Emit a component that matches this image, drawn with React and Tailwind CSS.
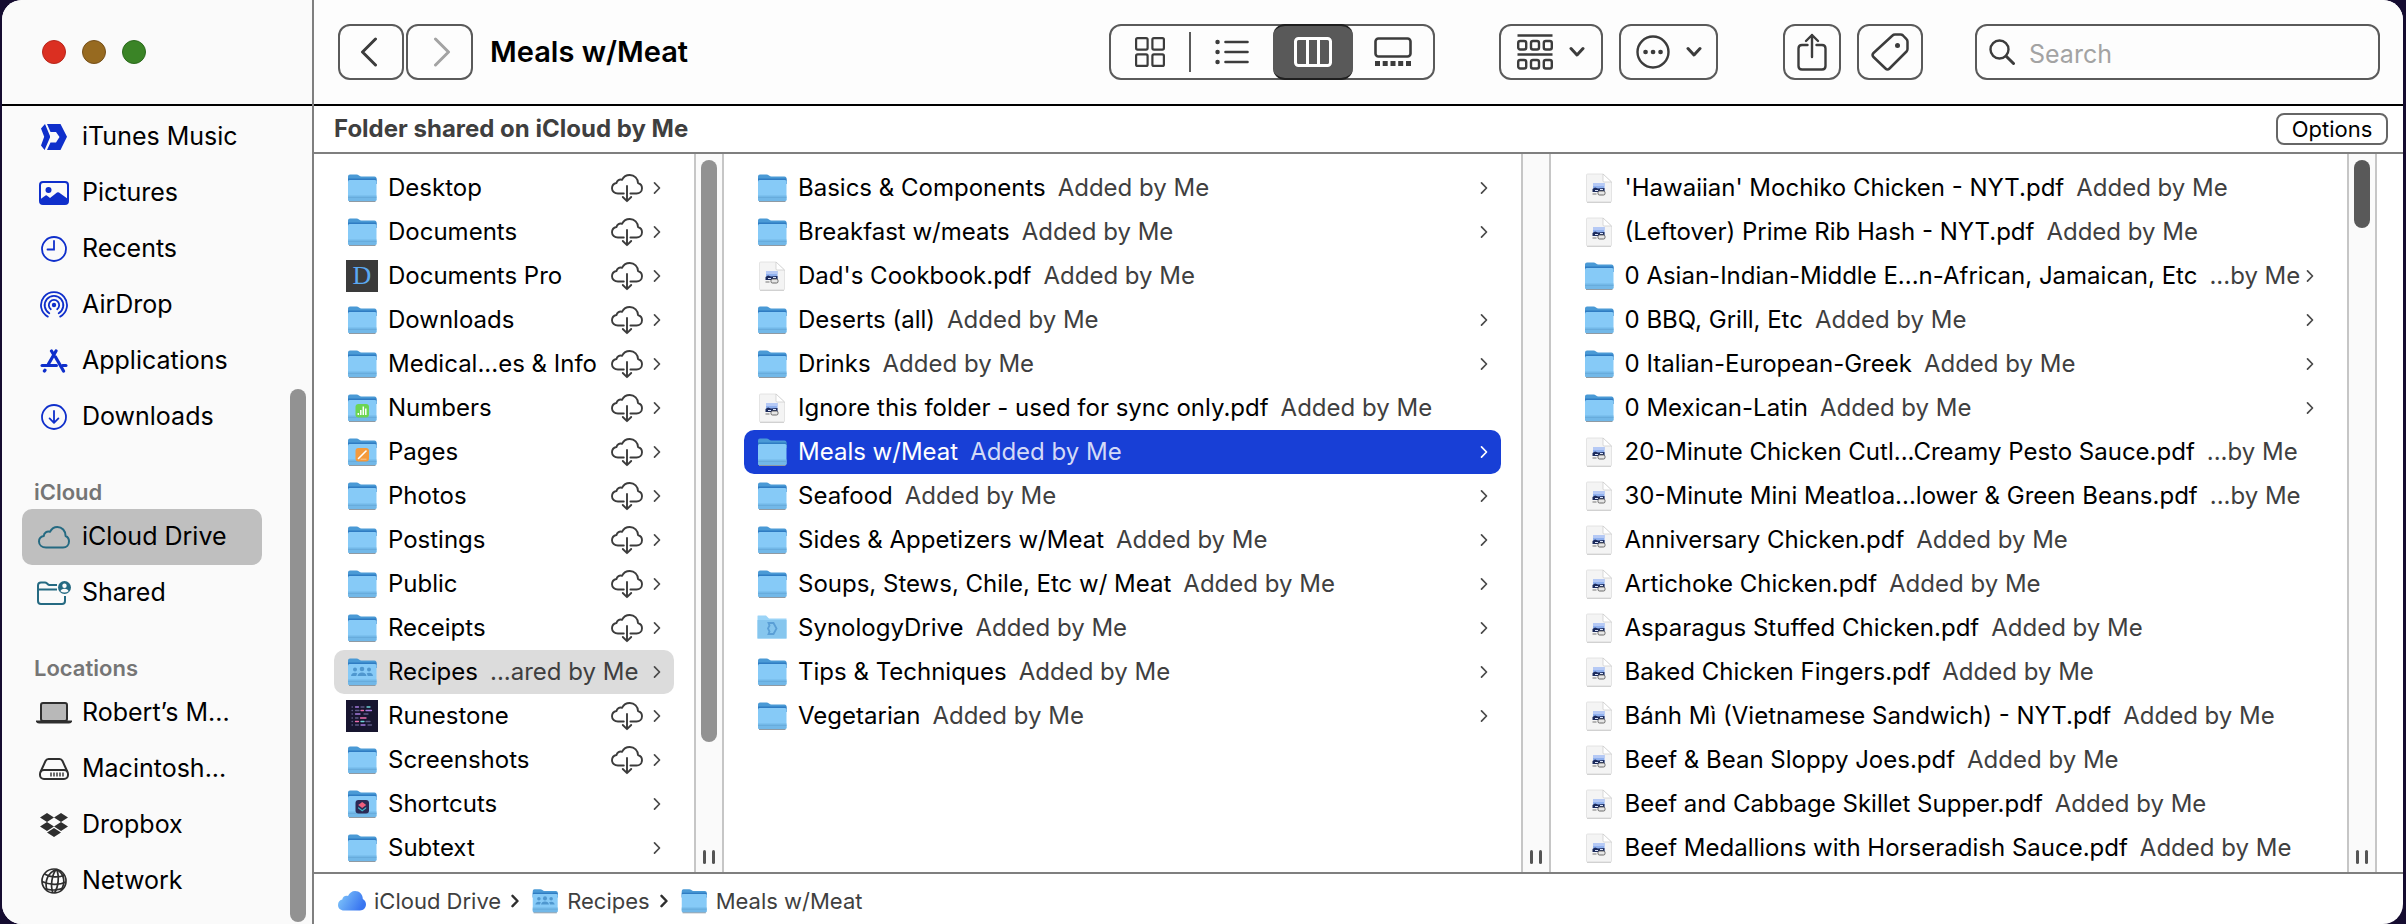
import { useState } from "react";

const favorites = [
  { name: "iTunes Music", icon: SynologyIcon },
  { name: "Pictures", icon: PicturesIcon },
  { name: "Recents", icon: ClockIcon },
  { name: "AirDrop", icon: AirDropIcon },
  { name: "Applications", icon: AppsIcon },
  { name: "Downloads", icon: DownloadIcon },
];

const icloud = [
  { name: "iCloud Drive", icon: CloudIcon },
  { name: "Shared", icon: SharedIcon },
];

const locations = [
  { name: "Robert’s M...", icon: LaptopIcon },
  { name: "Macintosh...", icon: DiskIcon },
  { name: "Dropbox", icon: DropboxIcon },
  { name: "Network", icon: GlobeIcon },
];

const driveItems = [
  { name: "Desktop", cloud: true },
  { name: "Documents", cloud: true },
  { name: "Documents Pro", kind: "docpro", cloud: true },
  { name: "Downloads", cloud: true },
  { name: "Medical...es & Info", cloud: true },
  { name: "Numbers", kind: "numbers", cloud: true },
  { name: "Pages", kind: "pages", cloud: true },
  { name: "Photos", cloud: true },
  { name: "Postings", cloud: true },
  { name: "Public", cloud: true },
  { name: "Receipts", cloud: true },
  { name: "Recipes", kind: "people", note: "...ared by Me" },
  { name: "Runestone", kind: "runestone", cloud: true },
  { name: "Screenshots", cloud: true },
  { name: "Shortcuts", kind: "shortcuts" },
  { name: "Subtext" },
];

const recipeItems = [
  { name: "Basics & Components", note: "Added by Me" },
  { name: "Breakfast w/meats", note: "Added by Me" },
  { name: "Dad's Cookbook.pdf", kind: "pdf", note: "Added by Me" },
  { name: "Deserts (all)", note: "Added by Me" },
  { name: "Drinks", note: "Added by Me" },
  { name: "Ignore this folder - used for sync only.pdf", kind: "pdf", note: "Added by Me" },
  { name: "Meals w/Meat", note: "Added by Me" },
  { name: "Seafood", note: "Added by Me" },
  { name: "Sides & Appetizers w/Meat", note: "Added by Me" },
  { name: "Soups, Stews, Chile, Etc w/ Meat", note: "Added by Me" },
  { name: "SynologyDrive", kind: "synology", note: "Added by Me" },
  { name: "Tips & Techniques", note: "Added by Me" },
  { name: "Vegetarian", note: "Added by Me" },
];

const mealItems = [
  { name: "'Hawaiian' Mochiko Chicken - NYT.pdf", kind: "pdf", note: "Added by Me" },
  { name: "(Leftover) Prime Rib Hash - NYT.pdf", kind: "pdf", note: "Added by Me" },
  { name: "0 Asian-Indian-Middle E...n-African, Jamaican, Etc", note: "...by Me" },
  { name: "0 BBQ, Grill, Etc", note: "Added by Me" },
  { name: "0 Italian-European-Greek", note: "Added by Me" },
  { name: "0 Mexican-Latin", note: "Added by Me" },
  { name: "20-Minute Chicken Cutl...Creamy Pesto Sauce.pdf", kind: "pdf", note: "...by Me" },
  { name: "30-Minute Mini Meatloa...lower & Green Beans.pdf", kind: "pdf", note: "...by Me" },
  { name: "Anniversary Chicken.pdf", kind: "pdf", note: "Added by Me" },
  { name: "Artichoke Chicken.pdf", kind: "pdf", note: "Added by Me" },
  { name: "Asparagus Stuffed Chicken.pdf", kind: "pdf", note: "Added by Me" },
  { name: "Baked Chicken Fingers.pdf", kind: "pdf", note: "Added by Me" },
  { name: "Bánh Mì (Vietnamese Sandwich) - NYT.pdf", kind: "pdf", note: "Added by Me" },
  { name: "Beef & Bean Sloppy Joes.pdf", kind: "pdf", note: "Added by Me" },
  { name: "Beef and Cabbage Skillet Supper.pdf", kind: "pdf", note: "Added by Me" },
  { name: "Beef Medallions with Horseradish Sauce.pdf", kind: "pdf", note: "Added by Me" },
];

/* ---------- sidebar icons ---------- */

function SynologyIcon() {
  return (
    <svg width="26" height="26" viewBox="0 0 26 26" fill="#0f2fcb">
      <path d="M4 0L0 4.5L3.2 12.8L0 21.5L3.6 26L9 13.5V12z" />
      <path d="M6 0H19.5L26 12.8L19.5 26H6L9.5 18.5H15L18.5 13L15 8H9.5z" />
    </svg>
  );
}

function PicturesIcon() {
  return (
    <svg width="30" height="24" viewBox="0 0 30 24">
      <rect x="1" y="1" width="28" height="22" rx="3" fill="none" stroke="#0f2fcb" strokeWidth="2" />
      <circle cx="9.5" cy="9" r="3" fill="#0f2fcb" />
      <path d="M1 18.5L6.5 14.5Q7.5 14 8.5 15L11 17L18 11.5Q19 11 20 11.5L29 18V21Q29 23 27 23H3Q1 23 1 21z" fill="#0f2fcb" />
    </svg>
  );
}

function ClockIcon() {
  return (
    <svg width="26" height="26" viewBox="0 0 26 26" fill="none" stroke="#0f2fcb" strokeWidth="1.8" strokeLinecap="round">
      <circle cx="13" cy="13" r="12" />
      <path d="M13 5V13.5H6.5" />
    </svg>
  );
}

function AirDropIcon() {
  return (
    <svg width="28" height="28" viewBox="0 0 28 28" fill="none" stroke="#0f2fcb" strokeWidth="1.8" strokeLinecap="round">
      <circle cx="14" cy="14" r="2.2" fill="#0f2fcb" stroke="none" />
      <path d="M10.8 18.2A5.2 5.2 0 1 1 17.2 18.2" />
      <path d="M9.3 22.2A9.3 9.3 0 1 1 18.7 22.2" />
      <path d="M7.8 25.6A13 13 0 1 1 20.2 25.6" />
    </svg>
  );
}

function AppsIcon() {
  return (
    <svg width="28" height="24" viewBox="0 0 28 24" fill="none" stroke="#0f2fcb" strokeWidth="3.2" strokeLinecap="round">
      <path d="M16 2L8.5 15" />
      <path d="M11.5 2L13.6 5.4" />
      <path d="M15.5 8L23.5 22" />
      <path d="M2 16.5H16.5" strokeWidth="3" />
      <path d="M22.5 16.5H26" strokeWidth="3" />
      <path d="M5 21.2L4.4 22" />
    </svg>
  );
}

function DownloadIcon() {
  return (
    <svg width="26" height="26" viewBox="0 0 26 26" fill="none" stroke="#0f2fcb" strokeWidth="1.8" strokeLinecap="round" strokeLinejoin="round">
      <circle cx="13" cy="13" r="12" />
      <path d="M13 7V18.5M8.6 14.4L13 18.8L17.4 14.4" />
    </svg>
  );
}

function CloudIcon() {
  return (
    <svg width="32" height="23" viewBox="0 0 32 23" fill="none" stroke="#256a82" strokeWidth="2" strokeLinejoin="round">
      <path d="M8 21.5C4 21.5 1 19 1 15.5C1 12.5 3 10.5 5.8 10C5.8 7 9 4.6 12 5.8C13.6 2.8 16 1 19.3 1C24 1 27.6 4.8 27.6 10C30 11 31 13 31 15.3C31 19 28.5 21.5 25 21.5z" />
    </svg>
  );
}

function SharedIcon() {
  return (
    <svg width="34" height="24" viewBox="0 0 34 24" fill="none" stroke="#256a82" strokeWidth="2">
      <path d="M20 4H12.5Q11.5 4 10.6 3L9.8 2.2Q9 1.5 8 1.5H4Q1 1.5 1 4.5V20Q1 23 4 23H25Q28 23 28 20V15" />
      <path d="M1 8.5H20" />
      <circle cx="27.5" cy="6.5" r="6.5" fill="#256a82" stroke="none" />
      <circle cx="27.5" cy="4.8" r="2.2" fill="#fafafa" stroke="none" />
      <path d="M23.5 10.3Q24 7.8 27.5 7.8T31.5 10.3Q29.8 11.6 27.5 11.6T23.5 10.3z" fill="#fafafa" stroke="none" />
    </svg>
  );
}

function LaptopIcon() {
  return (
    <svg width="36" height="22" viewBox="0 0 36 22">
      <rect x="5" y="1" width="26" height="18" rx="2" fill="#b8b8b8" stroke="#2e2e2e" strokeWidth="2" />
      <path d="M0 18.5H36V19.5Q35.5 21.5 33 21.5H3Q0.5 21.5 0 19.5z" fill="#2e2e2e" />
    </svg>
  );
}

function DiskIcon() {
  return (
    <svg width="30" height="22" viewBox="0 0 30 22" fill="none" stroke="#2e2e2e" strokeWidth="2">
      <rect x="1" y="12" width="28" height="9" rx="4" />
      <path d="M1.5 14L6.5 3Q7.5 1 9.5 1H20.5Q22.5 1 23.5 3L28.5 14" />
      <path d="M12 14.5V18.5M15 14.5V18.5M18 14.5V18.5M21 14.5V18.5M24 14.5V18.5" strokeWidth="1.4" />
    </svg>
  );
}

function DropboxIcon() {
  return (
    <svg width="28" height="24" viewBox="0 0 28 24" fill="#2e2e2e">
      <path d="M7 0L14 4.5L7 9L0 4.5zM21 0L28 4.5L21 9L14 4.5zM7 9L14 13.5L7 18L0 13.5zM21 9L28 13.5L21 18L14 13.5zM14 15L21 19.5L14 24L7 19.5z" />
    </svg>
  );
}

function GlobeIcon() {
  return (
    <svg width="26" height="26" viewBox="0 0 26 26" fill="none" stroke="#2e2e2e" strokeWidth="1.7">
      <circle cx="13" cy="13" r="12" />
      <path d="M15.5 1.2C11 6 9 18 12 25M15.5 1.2C6 5 3.5 14 6 22.5M15.5 1.2C18.5 8 17.5 19 13.5 25M15.5 1.2C24 6 24.5 15 20 22.5" />
      <path d="M3.5 6C9 9.5 18 10 23.5 7M1 13.5C8 17 18 17.5 25 14M4 20.8C9 22.5 17 22.5 22.5 20" />
    </svg>
  );
}

/* ---------- file icons ---------- */

function FolderBase() {
  return (
    <>
      <path d="M2 4.5Q2 2.5 4 2.5H10.5Q12 2.5 13 3.5T15.5 4.5H28.5Q30.5 4.5 30.5 6.5V12H2z" fill="#4a9ad6" />
      <path d="M2 6.5H30.5V12H2z" fill="#2f7cc3" />
      <path d="M2 9.5Q2 8 3.5 8H29Q30.5 8 30.5 9.5V27.5Q30.5 29 29 29H3.5Q2 29 2 27.5z" fill="#86caf7" />
      <path d="M2 23.5H30.5V27.5Q30.5 29 29 29H3.5Q2 29 2 27.5z" fill="#72b8e8" />
      <path d="M2 25.5H30.5" stroke="#62a5d4" strokeWidth="0.6" />
      <path d="M3 29.5H29.5" stroke="#8f9aa3" strokeWidth="1" />
    </>
  );
}

function FileIcon({ kind, className = "size-8" }) {
  if (kind === "pdf") {
    return (
      <svg className={className} viewBox="0 0 32 32">
        <path d="M3.5 3Q3.500 2 4.5 2H20L28.500 10V29Q28.500 30 27.5 30H4.5Q3.500 30 3.5 29z" fill="#f4f4f4" stroke="#dedede" strokeWidth="0.8" />
        <path d="M20 2V9Q20 10 21 10H28.5z" fill="#ffffff" stroke="#c9c9c9" strokeWidth="0.7" />
        <path d="M4 30.4H28" stroke="#c4c4c4" strokeWidth="0.8" />
        <rect x="10" y="11" width="11.5" height="9" fill="#8fb0ee" />
        <rect x="10" y="11" width="11.5" height="3" fill="#b5c9f5" />
        <path d="M9.5 17L12 15.500L15 16.5L21.5 16V20H9.5z" fill="#1b2a5c" />
        <path d="M12 18.5H15M17 17.5H20" stroke="#dbe4f8" strokeWidth="1" />
        <rect x="15" y="19" width="7" height="4" rx="1.5" fill="#e6e6e6" stroke="#5c5c5c" strokeWidth="0.9" />
        <path d="M9.500 22H13.5" stroke="#8a8a8a" strokeWidth="1.2" />
      </svg>
    );
  }
  if (kind === "docpro") {
    return (
      <span className="flex size-8 items-center justify-center bg-[#3a3a3a] font-['Liberation_Serif',serif] text-[26px] leading-8 text-[#5aa9f2]">
        D
      </span>
    );
  }
  if (kind === "runestone") {
    return (
      <svg className={className} viewBox="0 0 32 32" strokeWidth="1.3" strokeLinecap="round">
        <rect width="32" height="32" fill="#17152f" />
        <g stroke="#5d5a86">
          <path d="M6 7H6.5M6 10.5H6.5M6 14H6.5M6 18H6.5M6 21.5H6.5M6 25H6.5" />
          <path d="M15 7H18M9.5 10.5H13M18 14H22M9.5 18H12M20 21.5H24M9.5 25H12.5M22 25H25.5" />
        </g>
        <path d="M9.5 7H12.5M20 10.5H25.5M9.5 14H14M15 25H19" stroke="#a67be0" />
        <path d="M15 10.5H17.5M14.5 18H20M9.5 21.5H12.5" stroke="#ef6fae" />
        <path d="M21 7H24M15 21.5H18" stroke="#6fd3d8" />
      </svg>
    );
  }
  if (kind === "synology") {
    return (
      <svg className={className} viewBox="0 0 32 32">
        <path d="M1.5 4Q1.5 3.5 2 3.5H10L13 6.5H30.5V26.5H1.5z" fill="#9bd4f7" />
        <path d="M1.5 8H30.5V26.5H1.5z" fill="#86c6ee" />
        <path d="M12.5 11H17.5L20.5 16.5L17.5 22H12.5L13.5 19.5L12 16.5L13.5 13.5z" fill="none" stroke="#5a9fd6" strokeWidth="1.8" />
      </svg>
    );
  }
  return (
    <svg className={className} viewBox="0 0 32 32">
      <FolderBase />
      {kind === "numbers" ? (
        <>
          <rect x="9.5" y="12" width="13.5" height="13.5" rx="3" fill="#6bd552" />
          <path d="M12.3 23V21M14.8 23V18M17.3 23V14.5M19.8 23V16.5" stroke="#fff" strokeWidth="1.5" />
        </>
      ) : null}
      {kind === "pages" ? (
        <>
          <rect x="9.5" y="12" width="13.5" height="13.5" rx="3" fill="#f49a3c" />
          <path d="M12.5 22.5L20 15" stroke="#fff" strokeWidth="1.6" strokeLinecap="round" />
          <path d="M14.5 23.2H20.5" stroke="#fbd3a6" strokeWidth="0.8" />
        </>
      ) : null}
      {kind === "shortcuts" ? (
        <>
          <rect x="9.5" y="12" width="13.5" height="13.5" rx="3" fill="#2b2a55" />
          <path d="M16.2 14L20.2 17L16.2 20L12.2 17z" fill="#ef5f7e" />
          <path d="M12.2 19L16.2 22L20.2 19V20.5L16.2 23.5L12.2 20.5z" fill="#45b6c9" />
        </>
      ) : null}
      {kind === "people" ? (
        <g fill="#4f97cf">
          <circle cx="9" cy="13.5" r="2" />
          <circle cx="16" cy="13" r="2.3" />
          <circle cx="23" cy="13.5" r="2" />
          <path d="M5 20Q5.5 16.8 9 16.8Q10.5 16.8 11.3 17.5Q10.5 18.5 10.3 20zM11.5 20Q12 16.5 16 16.5T20.5 20zM27 20Q26.5 16.8 23 16.8Q21.5 16.8 20.7 17.5Q21.5 18.5 21.7 20z" />
        </g>
      ) : null}
    </svg>
  );
}

function CloudDownload() {
  return (
    <svg width="32" height="30" viewBox="0 0 32 30" fill="none" stroke="#3c3c3c" strokeWidth="1.9" strokeLinecap="round" strokeLinejoin="round">
      <path d="M12.8 20.5H7C3.5 20.5 1 18.3 1 15.3C1 12.5 3 10.5 5.5 10C6 7.5 8.5 6 11 6.8C12.5 3.8 15.5 2 18.8 2C23.5 2 27 5.5 27 10C29.5 10.8 31 12.7 31 15.2C31 18.3 28.5 20.5 25.5 20.5H19.4" />
      <path d="M16 13V28M11.8 24L16 28.2L20.2 24" />
    </svg>
  );
}

function Chevron({ className = "text-[#4a4a4a]", strokeWidth = 1.7 }) {
  return (
    <svg className={className} width="8" height="14" viewBox="0 0 8 14" fill="none" stroke="currentColor" strokeWidth={strokeWidth} strokeLinecap="round" strokeLinejoin="round">
      <path d="M1.5 1.8L6.5 7L1.5 12.2" />
    </svg>
  );
}

function ChevronDown() {
  return (
    <svg width="16" height="12" viewBox="0 0 16 12" fill="none" stroke="#3c3c3c" strokeWidth="3" strokeLinecap="round" strokeLinejoin="round">
      <path d="M2 2.5L8 9L14 2.5" />
    </svg>
  );
}

/* ---------- layout pieces ---------- */

function SidebarGroup({ title, items, selected, onSelect }) {
  return (
    <section>
      {title ? <h2 className="mt-8 h-8 px-8 text-[22px] leading-[30px] font-semibold text-[#757575]">{title}</h2> : null}
      <ul className="pr-[50px] pl-5">
        {items.map(({ name, icon: Icon }) => (
          <li key={name}>
            <button
              type="button"
              onClick={() => onSelect(name)}
              className={`flex h-14 w-full items-center gap-2 rounded-[10px] pl-3 text-left text-[25px] whitespace-nowrap text-black ${
                selected === name ? "bg-[#bfbfbf]" : ""
              }`}
            >
              <span className="flex w-10 shrink-0 justify-center">
                <Icon />
              </span>
              {name}
            </button>
          </li>
        ))}
      </ul>
    </section>
  );
}

function FileList({ label, items, selected, active }) {
  return (
    <ul aria-label={label} className="min-w-0 flex-1 overflow-hidden px-5 pt-3">
      {items.map((item) => {
        const isSelected = item.name === selected;
        const isActive = isSelected && active;
        return (
          <li key={item.name}>
            <button
              type="button"
              className={`flex h-11 w-full items-center rounded-[10px] pr-[13px] pl-3 text-left text-2xl whitespace-nowrap ${
                isActive ? "bg-[#183fd6] text-white" : isSelected ? "bg-[#dcdcdc] text-black" : "text-black"
              }`}
            >
              <span className="mr-2.5 shrink-0">
                <FileIcon kind={item.kind} />
              </span>
              <span>{item.name}</span>
              {item.note ? (
                <span className={`ml-3 ${isActive ? "text-[#d3daf7]" : "text-[#3f3f3f]"}`}>{item.note}</span>
              ) : null}
              <span className="ml-auto flex shrink-0 items-center gap-2.5">
                {item.cloud ? <CloudDownload /> : null}
                {item.kind !== "pdf" ? <Chevron className={isActive ? "text-white" : "text-[#4a4a4a]"} /> : null}
              </span>
            </button>
          </li>
        );
      })}
    </ul>
  );
}

function Track({ thumb }) {
  return (
    <div className="flex w-[30px] shrink-0 flex-col items-center justify-between border-x-2 border-[#c6c6c6] bg-[#fafafa] pt-1.5 pb-2">
      <div className={`w-4 rounded-full ${thumb}`} />
      <div className="flex gap-1.5">
        <span className="h-3.5 w-[3px] rounded-full bg-[#555555]" />
        <span className="h-3.5 w-[3px] rounded-full bg-[#555555]" />
      </div>
    </div>
  );
}

const toolButton = "flex h-14 items-center justify-center rounded-xl border-2 border-[#5a5a5a] bg-[#fdfdfd]";

function Toolbar() {
  const [query, setQuery] = useState("");

  return (
    <header className="flex h-[106px] shrink-0 items-center border-b-2 border-black bg-[#fdfdfd] pr-[23px] pl-6">
      <div className="flex gap-0.5">
        <button type="button" aria-label="Back" className={`${toolButton} w-[66px] pr-1`}>
          <svg width="18" height="30" viewBox="0 0 18 30" fill="none" stroke="#3c3c3c" strokeWidth="3" strokeLinecap="round" strokeLinejoin="round">
            <path d="M15.5 2L2.5 15L15.5 28" />
          </svg>
        </button>
        <button type="button" aria-label="Forward" className={`${toolButton} w-[67px] pl-1`}>
          <svg width="18" height="30" viewBox="0 0 18 30" fill="none" stroke="#a3a3a3" strokeWidth="3" strokeLinecap="round" strokeLinejoin="round">
            <path d="M2.5 2L15.5 15L2.5 28" />
          </svg>
        </button>
      </div>
      <h1 className="ml-[17px] flex-1 text-[29px] font-semibold whitespace-nowrap text-black">Meals w/Meat</h1>

      <div className="flex h-14 w-[326px] items-stretch rounded-xl border-2 border-[#5a5a5a]">
        <button type="button" aria-label="Icon view" className="flex w-[78px] items-center justify-center">
          <svg width="30" height="30" viewBox="0 0 30 30" fill="none" stroke="#3c3c3c" strokeWidth="2.2">
            <rect x="1.1" y="1.1" width="11.5" height="11.5" rx="1.5" />
            <rect x="17.4" y="1.1" width="11.5" height="11.5" rx="1.5" />
            <rect x="1.1" y="17.4" width="11.5" height="11.5" rx="1.5" />
            <rect x="17.4" y="17.4" width="11.5" height="11.5" rx="1.5" />
          </svg>
        </button>
        <span className="my-1.5 w-0.5 bg-[#5a5a5a]" />
        <button type="button" aria-label="List view" className="flex w-[82px] items-center justify-center">
          <svg width="34" height="26" viewBox="0 0 34 26" fill="none" stroke="#3c3c3c" strokeWidth="2.6" strokeLinecap="round">
            <path d="M10.5 3H32.5M10.5 13H32.5M10.5 23H32.5" />
            <path d="M2.5 3H2.6M2.5 13H2.6M2.5 23H2.6" strokeWidth="4.4" />
          </svg>
        </button>
        <button type="button" aria-label="Column view" aria-pressed="true" className="-my-0.5 flex w-20 items-center justify-center rounded-xl border-y-2 border-[#1f1f1f] bg-[#595959]">
          <svg width="38" height="30" viewBox="0 0 38 30" fill="none" stroke="#ffffff" strokeWidth="3">
            <rect x="1.5" y="1.5" width="35" height="27" rx="3" />
            <path d="M13.5 2V28M24.5 2V28" />
          </svg>
        </button>
        <button type="button" aria-label="Gallery view" className="flex w-20 items-center justify-center">
          <svg width="38" height="30" viewBox="0 0 38 30">
            <rect x="1.5" y="1.5" width="35" height="18" rx="3" fill="none" stroke="#3c3c3c" strokeWidth="2.6" />
            <path d="M1 24H6V29H1zM8.7 24H13.7V29H8.7zM16.5 24H21.5V29H16.5zM24.2 24H29.2V29H24.2zM32 24H37V29H32z" fill="#3c3c3c" />
          </svg>
        </button>
      </div>

      <button type="button" aria-label="Group items" className={`${toolButton} ml-16 w-[104px] gap-4`}>
        <svg width="36" height="36" viewBox="0 0 36 36" fill="none" stroke="#3c3c3c" strokeWidth="2.4">
          <path d="M0.5 1.5H35.5M0.5 20.5H35.5" />
          <rect x="1.2" y="7" width="8" height="8.5" rx="2" />
          <rect x="14" y="7" width="8" height="8.5" rx="2" />
          <rect x="26.8" y="7" width="8" height="8.5" rx="2" />
          <rect x="1.2" y="26" width="8" height="8.5" rx="2" />
          <rect x="14" y="26" width="8" height="8.5" rx="2" />
          <rect x="26.8" y="26" width="8" height="8.5" rx="2" />
        </svg>
        <ChevronDown />
      </button>
      <button type="button" aria-label="More actions" className={`${toolButton} ml-4 w-[99px] gap-4`}>
        <svg width="34" height="34" viewBox="0 0 34 34" fill="none" stroke="#3c3c3c">
          <circle cx="17" cy="17" r="15.5" strokeWidth="2.4" />
          <path d="M9.5 17H9.6M17 17H17.1M24.5 17H24.6" strokeWidth="4.6" strokeLinecap="round" />
        </svg>
        <ChevronDown />
      </button>

      <button type="button" aria-label="Share" className={`${toolButton} ml-[65px] w-[58px]`}>
        <svg width="30" height="38" viewBox="0 0 30 38" fill="none" stroke="#3c3c3c" strokeWidth="2.4" strokeLinecap="round" strokeLinejoin="round">
          <path d="M10.5 12H5Q1.5 12 1.5 15.5V33Q1.5 36.5 5 36.5H25Q28.5 36.5 28.5 33V15.5Q28.5 12 25 12H19.5" />
          <path d="M15 24V2M9 8L15 2L21 8" />
        </svg>
      </button>
      <button type="button" aria-label="Tags" className={`${toolButton} ml-4 w-[66px]`}>
        <svg width="38" height="38" viewBox="0 0 38 38" fill="none" stroke="#3c3c3c" strokeWidth="2.5" strokeLinejoin="round">
          <path d="M21.5 2.5Q22.5 1.5 24 1.5H29.5Q31 1.5 32 2.5L35.5 6.2Q36.5 7.2 36.5 8.7V16Q36.5 17.5 35.5 18.5L18.5 35.5Q16.5 37.5 14.5 35.5L2.5 24Q0.5 22 2.5 20z" />
          <circle cx="26.5" cy="12.5" r="2.5" fill="#3c3c3c" stroke="none" />
        </svg>
      </button>

      <label className="ml-[52px] flex h-14 w-[405px] items-center gap-3.5 rounded-xl border-2 border-[#5a5a5a] bg-[#fdfdfd] pl-3">
        <svg className="shrink-0" width="26" height="26" viewBox="0 0 26 26" fill="none" stroke="#3c3c3c" strokeWidth="2.4" strokeLinecap="round">
          <circle cx="10.5" cy="10.5" r="9" />
          <path d="M17.2 17.2L24.5 24.5" strokeWidth="3" />
        </svg>
        <input
          type="text"
          aria-label="Search"
          placeholder="Search"
          value={query}
          onChange={(event) => setQuery(event.target.value)}
          className="min-w-0 flex-1 bg-transparent pt-1.5 text-[25px] outline-none placeholder:text-[#a3a3a3]"
        />
      </label>
    </header>
  );
}

function PathBar() {
  return (
    <nav aria-label="Path" className="flex h-[52px] shrink-0 items-center border-t-2 border-[#7f7f7f] pt-1 pl-6 text-[22px] whitespace-nowrap text-[#3f3f3f]">
      <a href="#icloud" className="flex items-center gap-2">
        <svg width="28" height="20" viewBox="0 0 28 20">
          <defs>
            <linearGradient id="cloudFill" x1="0" y1="0" x2="1" y2="0.4">
              <stop offset="0" stopColor="#86cdfb" />
              <stop offset="1" stopColor="#3a76f0" />
            </linearGradient>
          </defs>
          <path d="M6 19.5C2.5 19.5 0 17.2 0 14C0 11 2 9 4.3 8.6C4.5 5.6 7.5 4 10 5C11.3 2 14 0 17 0C21.5 0 24.8 3.5 24.8 8C26.8 9 28 11 28 13.3C28 17 25.5 19.5 22 19.5z" fill="url(#cloudFill)" />
        </svg>
        iCloud Drive
      </a>
      <span className="mr-3 ml-2.5">
        <Chevron className="text-[#2e2e2e]" strokeWidth={2.4} />
      </span>
      <a href="#recipes" className="flex items-center gap-2">
        <FileIcon kind="people" className="size-7" />
        Recipes
      </a>
      <span className="mr-3 ml-2.5">
        <Chevron className="text-[#2e2e2e]" strokeWidth={2.4} />
      </span>
      <a href="#meals" className="flex items-center gap-2">
        <FileIcon className="size-7" />
        Meals w/Meat
      </a>
    </nav>
  );
}

export default function App() {
  const [place, setPlace] = useState("iCloud Drive");

  return (
    <div className="h-screen overflow-hidden bg-[#150c30] pr-[3px] pl-0.5 font-[Inter,'Liberation_Sans',sans-serif]">
      <div className="flex h-full overflow-hidden rounded-[20px] bg-white">
        <aside className="flex w-[312px] shrink-0 flex-col border-r-2 border-[#7f7f7f] bg-[#fafafa]">
          <div className="flex h-[106px] shrink-0 items-center gap-4 border-b-2 border-black pl-10">
            <button type="button" aria-label="Close" className="size-6 rounded-full border border-[#b8261b] bg-[#db2f21]" />
            <button type="button" aria-label="Minimize" className="size-6 rounded-full border border-[#76501a] bg-[#976a20]" />
            <button type="button" aria-label="Zoom" className="size-6 rounded-full border border-[#2b6a1d] bg-[#3a8426]" />
          </div>
          <div className="flex min-h-0 flex-1">
            <div className="min-w-0 flex-1 overflow-hidden pt-[3px]">
              <div className="-mr-7">
                <SidebarGroup items={favorites} selected={place} onSelect={setPlace} />
                <SidebarGroup title="iCloud" items={icloud} selected={place} onSelect={setPlace} />
                <SidebarGroup title="Locations" items={locations} selected={place} onSelect={setPlace} />
              </div>
            </div>
            <div className="flex w-7 shrink-0 flex-col justify-end pb-0.5 pl-1.5">
              <div className="h-[533px] w-4 rounded-full bg-[#929292]" />
            </div>
          </div>
        </aside>

        <main className="flex min-w-0 flex-1 flex-col">
          <Toolbar />
          <div className="flex h-12 shrink-0 items-center justify-between border-b-2 border-[#7f7f7f] pr-[15px] pl-5">
            <p className="text-2xl font-bold text-[#3f3f3f]">Folder shared on iCloud by Me</p>
            <button type="button" className="h-8 w-28 rounded-lg border-2 border-[#666666] bg-white text-[22px] leading-7 text-black">
              Options
            </button>
          </div>
          <div className="flex min-h-0 flex-1 pr-[26px]">
            <div className="flex w-[410px] shrink-0">
              <FileList label="iCloud Drive" items={driveItems} selected="Recipes" />
              <Track thumb="h-[582px] bg-[#929292]" />
            </div>
            <div className="flex min-w-0 flex-1">
              <FileList label="Recipes" items={recipeItems} selected="Meals w/Meat" active />
              <Track thumb="h-0" />
            </div>
            <div className="flex min-w-0 flex-1">
              <FileList label="Meals w/Meat" items={mealItems} />
              <Track thumb="h-[68px] bg-[#595959]" />
            </div>
          </div>
          <PathBar />
        </main>
      </div>
    </div>
  );
}
